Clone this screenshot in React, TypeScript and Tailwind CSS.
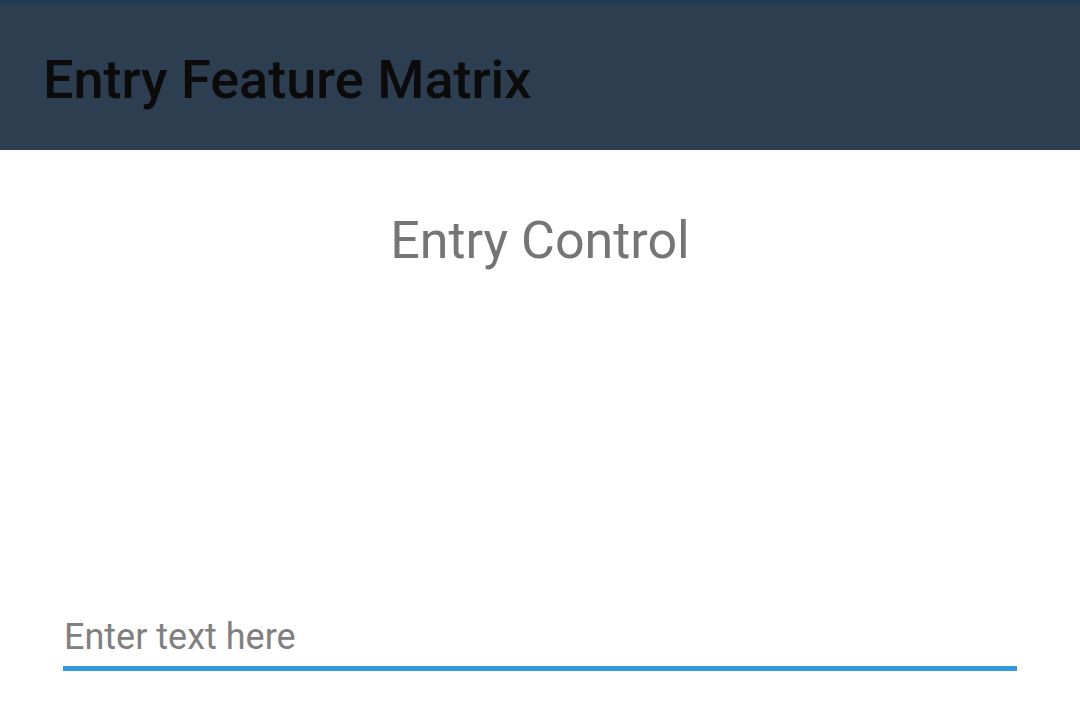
export default function App() {
  return (
    <div className="w-[1080px] h-[710px] bg-white flex flex-col font-['Roboto',sans-serif] overflow-hidden">
      {/* Nav bar */}
      <div className="h-[150px] bg-[#2d3e50] border-t-[3px] border-t-[#1f3a58] pt-[6px] flex items-center px-[43px]">
        <h1 className="text-[54px] font-medium text-[#0b0b0b] leading-none">Entry Feature Matrix</h1>
      </div>

      {/* Content */}
      <div className="flex-1 flex flex-col">
        <p className="mt-[65px] text-center text-[52px] text-[#757575] leading-none">Entry Control</p>
        <div className="flex-1" />
        <div className="mx-[63px] mb-[39px] border-b-[5px] border-b-[#3498db]">
          <input
            type="text"
            placeholder="Enter text here"
            className="w-full bg-transparent outline-none text-[36px] leading-none pb-[8px] pl-px text-[#333] placeholder:text-[#808080]"
          />
        </div>
      </div>
    </div>
  )
}
